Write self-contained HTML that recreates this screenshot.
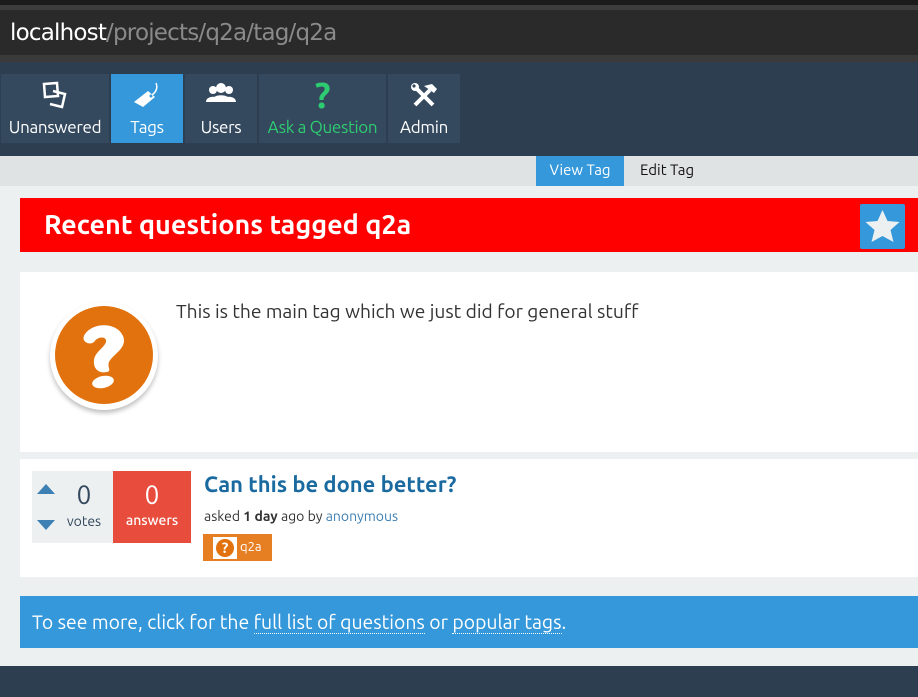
<!DOCTYPE html>
<html><head><style>
*{margin:0;padding:0;box-sizing:border-box}
body{width:918px;height:697px;overflow:hidden;background:#ecf0f1;font-family:"Ubuntu","DejaVu Sans","Liberation Sans",sans-serif;position:relative}
.a{position:absolute}
.nav{position:absolute;top:74px;height:69px;background:#34495e;color:#fff;font-size:17px;text-align:center}
.nav span{position:absolute;left:0;right:0;top:44px;letter-spacing:-0.3px}
.nav svg{position:absolute;left:50%;top:6px;transform:translateX(-50%)}
</style></head><body>
<div class="a" style="left:0;top:0;width:918px;height:5px;background:#1b1b1b"></div>
<div class="a" style="left:0;top:5px;width:918px;height:5px;background:#3c3c3c"></div>
<div class="a" style="left:0;top:10px;width:918px;height:45px;background:#2a2a2a"></div>
<div class="a" style="left:0;top:55px;width:918px;height:7px;background:#3a3a3a"></div>
<div class="a" style="left:10px;top:20px;font-size:23px;color:#fff;font-family:'DejaVu Sans',sans-serif;letter-spacing:-0.8px">localhost<span style="color:#8a8a8a">/projects/q2a/tag/q2a</span></div>
<div class="a" style="left:0;top:62px;width:918px;height:94px;background:#2c3e50"></div>
<div class="nav" style="left:1px;width:108px"><svg width="32" height="32" viewBox="0 0 32 32"><path d="M5 4l13-1 1 13-13 1z M14 11l12 3-3 13-12-3" fill="none" stroke="#fff" stroke-width="2.5"/></svg><span>Unanswered</span></div>
<div class="nav" style="left:111px;width:72px;background:#3498db"><svg width="32" height="32" viewBox="0 0 32 32"><path d="M3 22l14-11 7 6-12 10z" fill="#fff"/><circle cx="20" cy="16" r="1.5" fill="#3498db"/><path d="M21 15c4-3 6-7 4-12" fill="none" stroke="#fff" stroke-width="1.5"/></svg><span>Tags</span></div>
<div class="nav" style="left:185px;width:72px"><svg width="32" height="28" viewBox="0 0 32 28"><circle cx="8" cy="10" r="4" fill="#fff"/><circle cx="24" cy="10" r="4" fill="#fff"/><circle cx="16" cy="8" r="5" fill="#fff"/><path d="M1 22c0-7 14-7 14 0zM17 22c0-7 14-7 14 0zM6 22c0-9 20-9 20 0z" fill="#fff"/></svg><span>Users</span></div>
<div class="nav" style="left:259px;width:127px;color:#2ecc71"><span style="font-size:36px;font-weight:bold;top:0px">?</span><span>Ask a Question</span></div>
<div class="nav" style="left:388px;width:72px"><svg width="32" height="32" viewBox="0 0 32 32"><path d="M7 25L22 10" stroke="#fff" stroke-width="4"/><path d="M16 6l8-2 5 5-3 4-4-3z" fill="#fff"/><path d="M9 9l16 16" stroke="#fff" stroke-width="4"/><circle cx="7" cy="7" r="4" fill="#fff"/><circle cx="6" cy="6" r="1.6" fill="#34495e"/></svg><span>Admin</span></div>
<div class="a" style="left:0;top:156px;width:918px;height:30px;background:#dfe3e4"></div>
<div class="a" style="left:536px;top:156px;width:88px;height:30px;background:#3498db;color:#fff;font-size:15px;line-height:28px;text-align:center">View Tag</div>
<div class="a" style="left:640px;top:156px;height:30px;color:#111;font-size:15px;line-height:28px">Edit Tag</div>
<div class="a" style="left:20px;top:198px;width:898px;height:54px;background:#f00"></div>
<div class="a" style="left:44px;top:210px;color:#fff;font-size:27px;font-weight:bold;letter-spacing:0px">Recent questions tagged q2a</div>
<div class="a" style="left:860px;top:204px;width:45px;height:45px;background:#3498db;border-radius:2px"><svg width="45" height="45" viewBox="0 0 45 45"><path d="M22.5 6l5 11 12 1-9 8 3 12-11-6-11 6 3-12-9-8 12-1z" fill="#ecf0f1"/></svg></div>
<div class="a" style="left:20px;top:272px;width:898px;height:180px;background:#fff"></div>
<div class="a" style="left:50px;top:302px;width:108px;height:108px;border-radius:50%;background:#fff;box-shadow:0 3px 5px rgba(0,0,0,.25)"></div>
<div class="a" style="left:55px;top:306px;width:98px;height:98px;border-radius:50%;background:#e2720d"><svg width="98" height="98" viewBox="0 0 98 98"><path d="M30 28c8-12 32-12 38 2 5 12-10 18-14 26-2 5 3 9-2 10-9 2-14-4-13-12 1-8 10-12 12-18 1-6-8-6-12 0-5 4-14-1-9-8z" fill="#fff"/><ellipse cx="48" cy="76" rx="11" ry="6" fill="#fff" transform="rotate(-12 48 76)"/></svg></div>
<div class="a" style="left:176px;top:300px;color:#333;font-size:19.2px">This is the main tag which we just did for general stuff</div>
<div class="a" style="left:20px;top:459px;width:898px;height:118px;background:#fff"></div>
<div class="a" style="left:32px;top:471px;width:81px;height:72px;background:#ecf0f1"></div>
<div class="a" style="left:37px;top:484px;width:0;height:0;border-left:9px solid transparent;border-right:9px solid transparent;border-bottom:10px solid #3c80b4"></div>
<div class="a" style="left:37px;top:520px;width:0;height:0;border-left:9px solid transparent;border-right:9px solid transparent;border-top:10px solid #3c80b4"></div>
<div class="a" style="left:62px;top:480px;width:44px;text-align:center;font-size:26px;color:#34495e">0</div>
<div class="a" style="left:62px;top:513px;width:44px;text-align:center;font-size:14px;color:#34495e">votes</div>
<div class="a" style="left:113px;top:471px;width:78px;height:72px;background:#e74c3c;color:#fff;text-align:center"><div style="font-size:26px;margin-top:9px">0</div><div style="font-size:14px;margin-top:3px;font-weight:500">answers</div></div>
<div class="a" style="left:204px;top:472px;font-size:22px;font-weight:bold;color:#1a6aa0">Can this be done better?</div>
<div class="a" style="left:204px;top:508px;font-size:14px;color:#333">asked <b>1 day</b> ago by <span style="color:#3d7fb3">anonymous</span></div>
<div class="a" style="left:203px;top:534px;width:69px;height:27px;background:#e67e22"><div style="position:absolute;left:10px;top:3px;width:24px;height:22px;background:#fff"><div style="margin:2px 3px;width:18px;height:18px;border-radius:50%;background:#e2720d;color:#fff;font-size:15px;font-weight:bold;text-align:center;line-height:18px">?</div></div><span style="position:absolute;left:37px;top:6px;color:#fff;font-size:13px">q2a</span></div>
<div class="a" style="left:20px;top:596px;width:898px;height:52px;background:#3498db;color:#fff;font-size:19.4px;line-height:52px;padding-left:12px">To see more, click for the <span style="border-bottom:1px dotted #fff">full list of questions</span> or <span style="border-bottom:1px dotted #fff">popular tags</span>.</div>
<div class="a" style="left:0;top:666px;width:918px;height:31px;background:#2c3e50"></div>
</body></html>
